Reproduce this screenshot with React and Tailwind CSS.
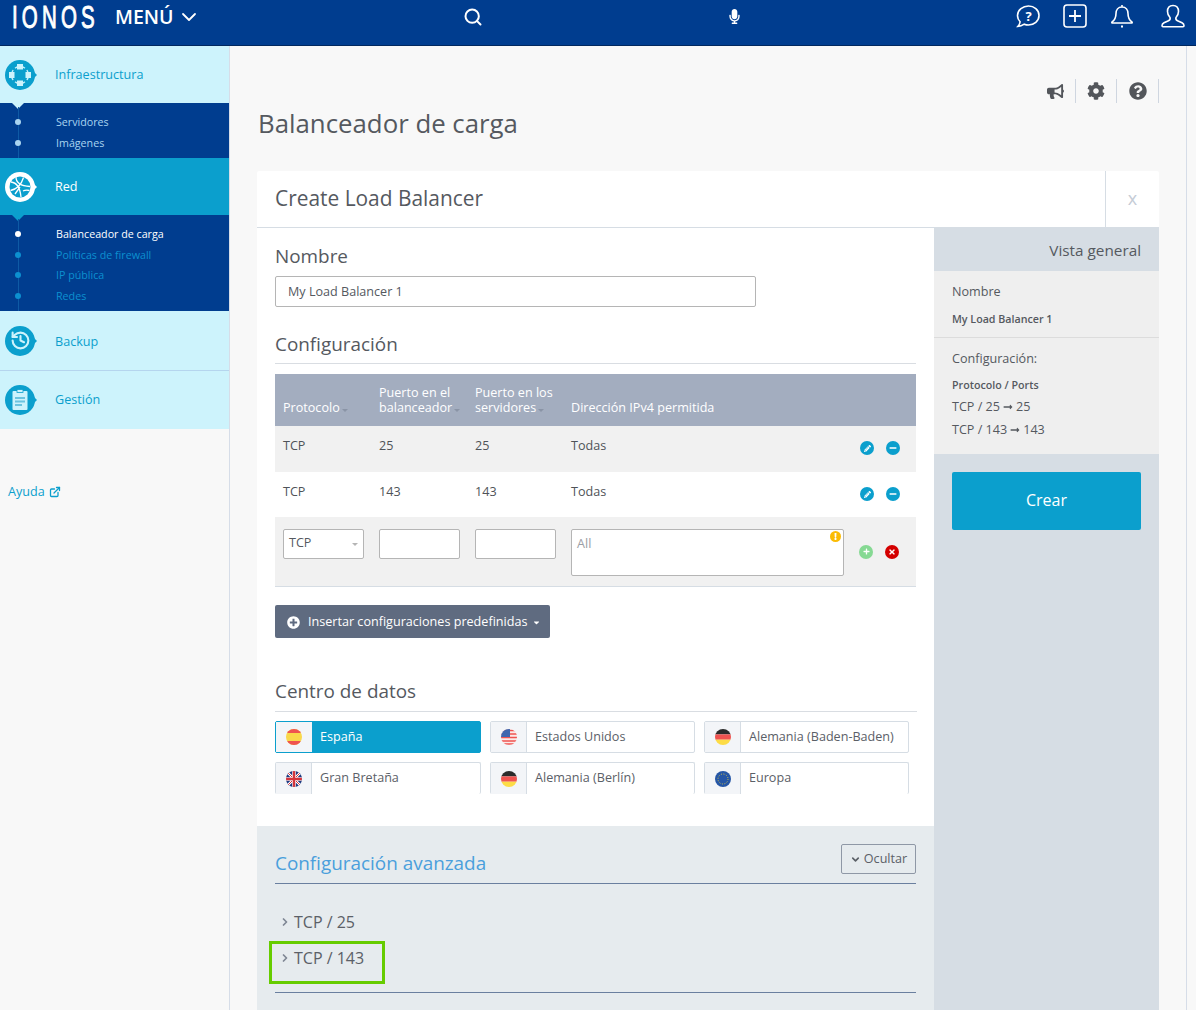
import React from 'react';
import { FaBullhorn, FaCog, FaQuestionCircle, FaPencilAlt, FaMinus, FaPlus, FaTimes, FaExclamation, FaPlusCircle, FaCaretDown, FaLongArrowAltRight, FaMicrophone } from 'react-icons/fa';
import { Search, ChevronDown, ChevronRight, ExternalLink, History } from 'lucide-react';

// Small caret used next to the sortable table headers
const Caret = ({ className = 'text-[#8a94a6]' }) => (
  <span className={`inline-block align-middle ml-[2px] mt-[3px] w-0 h-0 border-x-[3px] border-x-transparent border-t-[3px] border-t-current ${className}`} />
);

const RoundBubble = ({ light, children }) => (
  <div className="relative w-[32px] h-[32px] shrink-0">
    <div className={`w-[30px] h-[30px] mt-[1px] rounded-full flex items-center justify-center ${light ? 'bg-white text-[#0b9fcd]' : 'bg-[#0b9fcd] text-[#cdf3fc]'}`}>
      {children}
    </div>
    <span className={`absolute right-0 top-[12px] w-0 h-0 border-y-[4px] border-y-transparent border-l-[4px] ${light ? 'border-l-white' : 'border-l-[#0b9fcd]'}`} />
  </div>
);

const InfraIcon = () => (
  <svg width="24" height="24" viewBox="0 0 24 24" fill="none">
    <circle cx="12" cy="12" r="8.5" stroke="#cdf3fc" strokeWidth="1.3" />
    <path d="M5 5l2 2M19 5l-2 2M5 19l2-2M19 19l-2-2" stroke="#0b9fcd" strokeWidth="2.5" />
    <rect x="9" y="1" width="6" height="5.500" fill="#cdf3fc" />
    <rect x="9" y="17.500" width="6" height="5.500" fill="#cdf3fc" />
    <rect x="1" y="9" width="5.500" height="6" fill="#cdf3fc" />
    <rect x="17.500" y="9" width="5.500" height="6" fill="#cdf3fc" />
  </svg>
);

const GlobeIcon = () => (
  <svg width="22" height="22" viewBox="0 0 22 22" fill="none">
    <circle cx="11" cy="11" r="10.500" fill="#0b9fcd" />
    <path d="M2 6c5 .5 9 5 10 15M7 1c0 5 4 9 14 9.500M1.500 14.500C6 13.500 12 10 14.500 1.500M11 11l-5 7M14 15c2-1 4-1 6.500-.5" stroke="#fff" strokeWidth="1.300" />
  </svg>
);

const ClipboardIcon = () => (
  <svg width="20" height="24" viewBox="0 0 20 24">
    <rect x="2.500" y="3" width="15" height="19" rx="1" fill="#cdf3fc" />
    <rect x="7" y="1.500" width="6" height="3" fill="#cdf3fc" stroke="#0b9fcd" strokeWidth="0.800" />
    <rect x="5" y="9" width="10" height="2" fill="#6cc4df" />
    <rect x="5" y="12.500" width="10" height="2" fill="#6cc4df" />
    <rect x="5" y="16" width="7" height="2" fill="#6cc4df" />
  </svg>
);

const NavItem = ({ icon, label, active, border, height = 'h-[57px]', labelClass = 'pt-[2px]' }) => (
  <div className={`${height} flex items-center pl-[5px] gap-[18px] text-[12.6px] ${active ? 'bg-[#0b9fcd] text-white' : 'bg-[#cdf3fc] text-[#0b9fcd]'} ${border ? 'border-b border-[#b5d5ee]' : ''}`}>
    {icon}
    <span className={labelClass}>{label}</span>
  </div>
);

const SubNav = ({ items, notch }) => (
  <div className="relative bg-[#003d8f] pt-[9px] pb-[5px] text-[10.7px]">
    <span className={`absolute left-[12px] top-0 w-0 h-0 border-x-[6px] border-x-transparent border-t-[6px] ${notch}`} />
    <span className="absolute left-[18px] top-[4px] bottom-0 w-px bg-[#0e5aa5]" />
    {items.map((item) => (
      <div key={item.label} className={`relative h-[20.5px] pl-[56px] flex items-center ${item.color}`}>
        <span className={`absolute left-[15px] top-[7px] w-[6px] h-[6px] rounded-full ${item.dot}`} />
        {item.label}
      </div>
    ))}
  </div>
);

const Sidebar = () => (
  <aside className="w-[230px] shrink-0 border-r border-[#d6dde8] bg-[#f8f8f8]">
    <NavItem label="Infraestructura" icon={<RoundBubble><InfraIcon /></RoundBubble>} />
    <SubNav
      notch="border-t-[#cdf3fc]"
      items={[
        { label: 'Servidores', color: 'text-[#a9d4f0]', dot: 'bg-[#a9d4f0]' },
        { label: 'Imágenes', color: 'text-[#a9d4f0]', dot: 'bg-[#a9d4f0]' },
      ]}
    />
    <NavItem active label="Red" icon={<RoundBubble light><GlobeIcon /></RoundBubble>} />
    <SubNav
      notch="border-t-[#0b9fcd]"
      items={[
        { label: 'Balanceador de carga', color: 'text-white', dot: 'bg-white' },
        { label: 'Políticas de firewall', color: 'text-[#0c90d0]', dot: 'bg-[#0c90d0]' },
        { label: 'IP pública', color: 'text-[#0c90d0]', dot: 'bg-[#0c90d0]' },
        { label: 'Redes', color: 'text-[#0c90d0]', dot: 'bg-[#0c90d0]' },
      ]}
    />
    <NavItem border height="h-[60px]" labelClass="pt-[4px]" label="Backup" icon={<RoundBubble><History size={21} strokeWidth={2.4} /></RoundBubble>} />
    <NavItem height="h-[58px]" labelClass="" label="Gestión" icon={<RoundBubble><ClipboardIcon /></RoundBubble>} />
    <div className="mt-[54px] pl-[8px] flex items-center gap-[4px] text-[12.6px] text-[#0b9fcd]">
      Ayuda <ExternalLink size={12} strokeWidth={2.6} />
    </div>
  </aside>
);

const Header = () => (
  <header className="h-[46px] shrink-0 bg-[#003d8f] border-b border-[#01285f] flex items-center text-white relative">
    <div className="w-[463px] shrink-0 flex items-center pl-[12px] h-[32px] -mt-[12px]">
      <div className="w-[103px] h-[32px] shrink-0">
        <span className="inline-block origin-left scale-x-[0.64] text-[32px] leading-[32px] tracking-[6.5px] font-['Liberation_Sans',sans-serif]" style={{ WebkitTextStroke: '1px white' }}>IONOS</span>
      </div>
      <span className="text-[19.5px] font-semibold">MENÚ</span>
      <ChevronDown size={24} strokeWidth={1.8} className="ml-[3px]" />
    </div>
    <div className="w-[262px] -mt-[12px]">
      <Search size={20} strokeWidth={2.4} />
    </div>
    <div className="flex-1 -mt-[12px]">
      <FaMicrophone size={15} className="ml-[2px]" />
    </div>
    <div className="flex items-center gap-[23px] pr-[11px] -mt-[13px]">
      <svg width="24" height="24" viewBox="0 0 24 24" fill="none" stroke="white" strokeWidth="1.6">
        <path d="M12.5 2C18 2 23 6 23 11.5S18 21 12.5 21c-1.6 0-3-.3-4.200-.8C6.500 21.500 4.500 22.500 1.800 22.500c1.200-1.200 2.200-2.800 2.300-4.700C2.300 16 1.500 13.800 1.500 11.500 1.500 6 7 2 12.500 2z" />
        <text x="12.500" y="16.500" fontSize="13" fontWeight="700" fill="white" stroke="none" textAnchor="middle" fontFamily="Open Sans">?</text>
      </svg>
      <svg width="24" height="24" viewBox="0 0 24 24" fill="none" stroke="white" strokeWidth="1.6">
        <rect x="1" y="1" width="22" height="22" rx="3" />
        <path d="M12 6v12M6 12h12" strokeWidth="1.8" />
      </svg>
      <svg width="24" height="24" viewBox="0 0 24 24" fill="none" stroke="white" strokeWidth="1.6">
        <path d="M12 1v2M12 3c-4 0-6 3-6 6.500 0 4-1 6.500-4 8.500-.5.5 0 1 .5 1h19c.5 0 1-.5.5-1-3-2-4-4.500-4-8.500C18 6 16 3 12 3z" />
        <path d="M11 22.500h2" strokeWidth="2" />
      </svg>
      <svg width="24" height="24" viewBox="0 0 24 24" fill="none" stroke="white" strokeWidth="1.6" className="ml-[4px]">
        <path d="M12 1.500c-3.500 0-5.500 2.500-5.500 6 0 2.500 1 4.500 2.500 6 .5 1.500 0 2.500-1.500 3.200L3 18.800c-1.500.8-2 2-2 3 0 .6.400 1 1 1h20c.6 0 1-.4 1-1 0-1-.5-2.200-2-3l-4.500-2.100c-1.500-.7-2-1.700-1.500-3.200 1.500-1.500 2.500-3.500 2.500-6 0-3.500-2-6-5.500-6z" />
      </svg>
    </div>
  </header>
);

const IconBadge = ({ bg, children, className = '' }) => (
  <span className={`w-[14px] h-[14px] rounded-full flex items-center justify-center text-white ${bg} ${className}`}>
    {children}
  </span>
);

const gridCols = 'grid grid-cols-[96px_96px_96px_1fr_72px] pl-[8px]';

const RuleRow = ({ port, bg }) => (
  <div className={`${gridCols} ${bg} pt-[11px] text-[12.6px] text-[#4f5358]`}>
    <span>TCP</span>
    <span>{port}</span>
    <span>{port}</span>
    <span>Todas</span>
    <span className="flex items-center gap-[12px] pl-[16px] h-[22px]">
      <IconBadge bg="bg-[#0b9fcd]"><FaPencilAlt size={7} /></IconBadge>
      <IconBadge bg="bg-[#0b9fcd]"><FaMinus size={8} /></IconBadge>
    </span>
  </div>
);

const Flag = ({ children }) => (
  <div className="w-[16px] h-[16px] rounded-full overflow-hidden">
    <svg width="16" height="16" viewBox="0 0 16 16">{children}</svg>
  </div>
);

const Spain = () => (
  <Flag>
    <rect width="16" height="16" fill="#f9d84a" />
    <rect width="16" height="4" fill="#ef5350" />
    <rect y="12" width="16" height="4" fill="#ef5350" />
  </Flag>
);
const Usa = () => (
  <Flag>
    <rect width="16" height="16" fill="#fbe9e7" />
    <path d="M0 1.500h16M0 5h16M0 8.500h16M0 12h16M0 15h16" stroke="#ef5350" strokeWidth="1.500" />
    <rect width="9" height="8" fill="#3f66ae" />
  </Flag>
);
const Germany = () => (
  <Flag>
    <rect width="16" height="5.400" fill="#2b2b2b" />
    <rect y="5.400" width="16" height="5.300" fill="#ef5350" />
    <rect y="10.700" width="16" height="5.300" fill="#fddc46" />
  </Flag>
);
const Britain = () => (
  <Flag>
    <rect width="16" height="16" fill="#1d3a80" />
    <path d="M0 0l16 16M16 0L0 16" stroke="#fff" strokeWidth="2.500" />
    <path d="M0 0l16 16M16 0L0 16" stroke="#d3343c" strokeWidth="1" />
    <path d="M8 0v16M0 8h16" stroke="#fff" strokeWidth="3.600" />
    <path d="M8 0v16M0 8h16" stroke="#d3343c" strokeWidth="2.400" />
  </Flag>
);
const Europe = () => (
  <Flag>
    <rect width="16" height="16" fill="#2556a6" />
    <circle cx="8" cy="8" r="5" fill="none" stroke="#d9c544" strokeWidth="1" strokeDasharray="1 1.600" />
  </Flag>
);

const DataCenter = ({ flag, label, active, open }) => (
  <div className={`h-[32px] flex items-stretch rounded-[2px] border text-[12.6px] ${open ? 'border-b-0' : ''} ${active ? 'bg-[#0b9fcd] border-[#0b9fcd] text-white' : 'bg-white border-[#d6dde4] text-[#5b6067]'}`}>
    <div className={`w-[36px] flex items-center justify-center bg-[#f3f5f8] ${active ? '' : 'border-r border-[#d6dde4]'}`}>
      {flag}
    </div>
    <span className="pl-[8px] leading-[29px]">{label}</span>
  </div>
);

const SectionTitle = ({ children, className = '' }) => (
  <h2 className={`text-[18.9px] leading-[28px] text-[#55595f] ${className}`}>{children}</h2>
);

const Overview = () => (
  <aside className="w-[225px] shrink-0 bg-[#d6dde4] text-[#55595f]">
    <div className="h-[43px] pr-[18px] pt-[1px] flex items-center justify-end text-[15.3px]">Vista general</div>
    <div className="bg-[#efefef] h-[183px] text-[12.6px]">
      <div className="h-[67px] border-b border-[#dcdcdc] pl-[18px] pt-[11px]">
        <div className="leading-[20px]">Nombre</div>
        <div className="mt-[9px] text-[10.7px] font-semibold leading-[16px]">My Load Balancer 1</div>
      </div>
      <div className="pl-[18px] pt-[11px]">
        <div className="leading-[20px]">Configuración:</div>
        <div className="mt-[8px] text-[10.7px] font-semibold leading-[16px]">Protocolo / Ports</div>
        <div className="mt-[5px] flex items-center gap-[3px] leading-[18px]">TCP / 25 <FaLongArrowAltRight size={10} /> 25</div>
        <div className="mt-[5px] flex items-center gap-[3px] leading-[18px]">TCP / 143 <FaLongArrowAltRight size={10} /> 143</div>
      </div>
    </div>
    <div className="pt-[18px] px-[18px]">
      <button className="w-full h-[58px] bg-[#0b9fcd] rounded-[2px] text-white text-[16px] pb-[2px]">Crear</button>
    </div>
  </aside>
);

const FormColumn = () => (
  <div className="w-[677px] shrink-0 bg-white">
    <div className="px-[18px] pt-[14px]">
      <SectionTitle>Nombre</SectionTitle>
      <div className="mt-[6px] w-[481px] h-[31px] border border-[#b5b5b5] rounded-[2px] pl-[12px] text-[12.6px] leading-[29px] text-[#55595f]">My Load Balancer 1</div>

      <SectionTitle className="mt-[23px] pb-[5px] border-b border-[#d9dde2]">Configuración</SectionTitle>

      <div className="mt-[10px] w-[641px] border-b border-[#d6dde4]">
        <div className={`${gridCols} bg-[#a3adbf] h-[52px] items-end pb-[11px] text-[12.6px] leading-[15px] text-white`}>
          <span>Protocolo<Caret /></span>
          <span>Puerto en el<br />balanceador<Caret /></span>
          <span>Puerto en los<br />servidores<Caret /></span>
          <span>Dirección IPv4 permitida</span>
          <span />
        </div>
        <div className="h-[46px] flex flex-col"><RuleRow port="25" bg="bg-[#f1f1f1] h-[46px]" /></div>
        <div className="h-[45px] flex flex-col"><RuleRow port="143" bg="bg-white h-[45px]" /></div>
        <div className={`${gridCols} bg-[#f1f1f1] h-[69px] pt-[12px]`}>
          <div className="relative w-[81px] h-[30px] bg-white border border-[#b5b5b5] rounded-[2px] pl-[5px] text-[12.6px] leading-[26px] text-[#55595f]">
            TCP
            <span className="absolute right-[5px] top-[13px] w-0 h-0 border-x-[3px] border-x-transparent border-t-[3px] border-t-[#b5b5b5]" />
          </div>
          <div className="w-[81px] h-[30px] bg-white border border-[#b5b5b5] rounded-[2px]" />
          <div className="w-[81px] h-[30px] bg-white border border-[#b5b5b5] rounded-[2px]" />
          <div className="relative w-[273px] h-[47px] bg-white border border-[#b5b5b5] rounded-[2px] pl-[5px] text-[12.6px] leading-[28px] text-[#9a9ea5]">
            All
            <IconBadge bg="bg-[#fbbc05]" className="absolute right-[2px] top-[1px] !w-[11px] !h-[11px]"><FaExclamation size={7} /></IconBadge>
          </div>
          <span className="flex items-center gap-[12px] -ml-[2px] pl-[17px] h-[45px]">
            <IconBadge bg="bg-[#86d993]"><FaPlus size={7} /></IconBadge>
            <IconBadge bg="bg-[#d40000]"><FaTimes size={8} /></IconBadge>
          </span>
        </div>
      </div>

      <button className="mt-[18px] h-[33px] w-[275px] bg-[#5f6b80] rounded-[2px] flex items-center pl-[12px] pt-[1px] gap-[8px] text-[12.6px] text-white">
        <FaPlusCircle size={13} />
        Insertar configuraciones predefinidas
        <FaCaretDown size={9} className="-ml-[3px]" />
      </button>

      <SectionTitle className="mt-[39px] pb-[6px] border-b border-[#d9dde2] w-[642px]">Centro de datos</SectionTitle>

      <div className="mt-[9px] grid grid-cols-[206px_205px_205px] gap-x-[9px] gap-y-[9px]">
        <DataCenter active flag={<Spain />} label="España" />
        <DataCenter flag={<Usa />} label="Estados Unidos" />
        <DataCenter flag={<Germany />} label="Alemania (Baden-Baden)" />
        <DataCenter open flag={<Britain />} label="Gran Bretaña" />
        <DataCenter open flag={<Germany />} label="Alemania (Berlín)" />
        <DataCenter open flag={<Europe />} label="Europa" />
      </div>
    </div>

    <div className="mt-[32px] bg-[#e6ebee] h-[190px] px-[18px] pt-[18px] relative">
      <div className="flex items-start justify-between border-b border-[#6a7f9f] h-[40px] w-[641px]">
        <h2 className="text-[18.9px] leading-[38px] text-[#4a9fdc]">Configuración avanzada</h2>
        <button className="w-[75px] h-[30px] border border-[#8f98a6] rounded-[2px] flex items-center justify-center gap-[3px] text-[12.6px] text-[#5b6067]">
          <ChevronDown size={11} strokeWidth={3.5} />
          Ocultar
        </button>
      </div>
      <div className="mt-[25px] flex items-center gap-[3px] pl-[4px] h-[26px] text-[16px] text-[#5b6067]">
        <ChevronRight size={12} strokeWidth={3.5} className="text-[#7f8794] -mt-[1px]" />
        TCP / 25
      </div>
      <div className="mt-[10px] flex items-center gap-[3px] pl-[4px] h-[26px] text-[16px] text-[#5b6067]">
        <ChevronRight size={12} strokeWidth={3.5} className="text-[#7f8794] -mt-[1px]" />
        TCP / 143
      </div>
      <div className="mt-[21px] w-[641px] border-t border-[#6a7f9f]" />
      {/* highlight drawn over the row */}
      <div className="absolute left-[12px] top-[115px] w-[116px] h-[43px] border-[3px] border-[#66cc00]" />
    </div>
  </div>
);

export default function App() {
  return (
    <div className="w-[1196px] h-[1010px] overflow-hidden flex flex-col bg-[#f8f8f8] font-['Open_Sans',sans-serif]">
      <Header />
      <div className="flex flex-1 min-h-0">
        <Sidebar />
        <main className="w-[957px] shrink-0 border-r border-[#d6dde8] pl-[27px] pr-[27px] overflow-hidden">
          <div className="flex justify-end items-center h-[24px] mt-[33px] text-[#53565b]">
            <span className="w-[41px] h-full flex items-center justify-center border-r border-[#cfd6e0]"><FaBullhorn size={17} /></span>
            <span className="w-[41px] h-full flex items-center justify-center border-r border-[#cfd6e0]"><FaCog size={18} /></span>
            <span className="w-[42px] h-full flex items-center justify-center border-r border-[#cfd6e0]"><FaQuestionCircle size={18} /></span>
          </div>
          <h1 className="-mt-[2px] h-[46px] pl-[1px] text-[25.8px] leading-[44px] text-[#55595f]">Balanceador de carga</h1>
          <div className="mt-[24px] w-[902px]">
            <div className="h-[57px] bg-white border-b border-[#d6dde4] rounded-t-[2px] flex items-center justify-between">
              <span className="pl-[18px] text-[20.9px] text-[#55595f]">Create Load Balancer</span>
              <span className="w-[54px] h-full border-l border-[#d6dde4] flex items-center justify-center text-[18px] text-[#c5ccd6] pb-[2px]">x</span>
            </div>
            <div className="flex">
              <FormColumn />
              <Overview />
            </div>
          </div>
        </main>
      </div>
    </div>
  );
}
